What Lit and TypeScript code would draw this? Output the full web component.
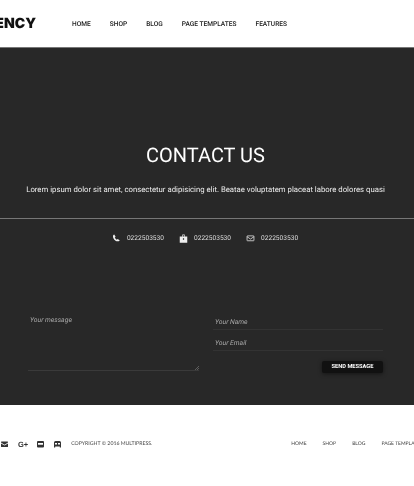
import { LitElement, html, css, svg } from 'lit';
import { customElement } from 'lit/decorators.js';

const icons = {
  phone: svg`<path d="M2.500.8 4.300 3.600 3.200 4.800c.5 1.200 1.500 2.200 2.700 2.800l1.100-1.100 2.700 1.700c-.3 1-1.100 1.600-2.100 1.500C4.300 10.300.6 6.300.8 2.600c.1-.9.700-1.600 1.700-1.800z" fill="currentColor"/>`,
  bag: svg`<path fill-rule="evenodd" d="M.5 3.200h3V1.900C3.500 1 4 .6 4.500.6h2c.6 0 1 .4 1 1.300v1.300h3V11.500H.5zM4.300 3.200h2.400V1.800c0-.2-.1-.3-.3-.3H4.600c-.2 0-.3.1-.3.3zM4.700 5.500v2.200h1.600V5.500z" fill="currentColor"/>`,
  mail: svg`<path d="M1.500 2.500h8a.6.6 0 0 1 .6.6v5.300a.6.6 0 0 1-.6.6h-8a.6.6 0 0 1-.6-.6V3.100a.6.6 0 0 1 .6-.6zM1 3.700l4.500 3 4.500-3" fill="none" stroke="currentColor" stroke-width="1"/>`,
  mailSolid: svg`<path d="M.5 1.500h6a.5.5 0 0 1 .5.500v.6L3.500 4.700 0 2.600V2a.5.5 0 0 1 .5-.5zM0 3.500l3.500 2.100L7 3.500v3a.5.5 0 0 1-.5.500h-6a.5.5 0 0 1-.5-.5z" fill="currentColor"/>`,
  flickr: svg`<path fill-rule="evenodd" d="M1 1h5a1 1 0 0 1 1 1v4.500a1 1 0 0 1-1 1H1a1 1 0 0 1-1-1V2a1 1 0 0 1 1-1zM1 3v1.800h5V3z" fill="currentColor"/>`,
  game: svg`<path fill-rule="evenodd" d="M1.500 1h4A1.500 1.500 0 0 1 7 2.500v5H5.800V6.500H1.200v1H0v-5A1.500 1.500 0 0 1 1.500 1zM1 3v1.500h2V3zm3 0v1.500h2V3z" fill="currentColor"/>`,
};

@customElement('app-root')
export class AppRoot extends LitElement {
  static styles = css`
    :host {
      display: block;
      width: 414px;
      height: 486px;
      overflow: hidden;
      background: #fff;
      font-family: Roboto, "Liberation Sans", sans-serif;
      text-rendering: geometricPrecision;
      filter: blur(0.3px);
    }
    .header {
      display: flex;
      align-items: center;
      height: 48px;
      box-sizing: border-box;
      border-bottom: 1px solid #777;
    }
    .logo {
      flex: none;
      width: 36px;
      display: flex;
      justify-content: flex-end;
      font-family: Inter, "Liberation Sans", sans-serif;
      font-weight: 900;
      font-size: 14px;
      color: #111;
      white-space: nowrap;
    }
    .nav {
      display: flex;
      gap: 19px;
      margin-left: 36px;
      font-size: 6.6px;
      font-weight: 500;
      color: #222;
      white-space: nowrap;
    }
    .dark {
      height: 357px;
      box-sizing: border-box;
      padding-top: 94px;
      background: #282828;
      display: flex;
      flex-direction: column;
    }
    h1 {
      margin: 0;
      padding-right: 3px;
      text-align: center;
      font-weight: 400;
      font-size: 20px;
      line-height: 26px;
      color: #fff;
    }
    .lead {
      margin: 16px 0 0;
      padding-right: 3px;
      text-align: center;
      font-size: 7.75px;
      line-height: 12px;
      color: #eee;
      white-space: nowrap;
    }
    .rule {
      height: 1px;
      margin-top: 22px;
      background: #777;
    }
    .contacts {
      display: flex;
      justify-content: center;
      gap: 15px;
      margin-top: 13px;
      padding-right: 4px;
      font-size: 6.6px;
      line-height: 12px;
      color: #ddd;
    }
    .contact {
      display: flex;
      align-items: center;
      gap: 6px;
    }
    .contact svg {
      width: 9px;
      height: 9px;
      color: #eee;
    }
    .form {
      display: flex;
      gap: 14px;
      margin: 65px 31px 0 28px;
    }
    .message {
      width: 171px;
      height: 62px;
      box-sizing: border-box;
      padding: 5px 2px;
      border-bottom: 1px solid #3a3a3a;
      position: relative;
    }
    .placeholder {
      display: block;
      font-style: italic;
      font-size: 6.8px;
      line-height: 12px;
      color: #aaa;
    }
    .grip {
      position: absolute;
      right: 0;
      bottom: 0;
      width: 4px;
      height: 4px;
      color: #888;
    }
    .fields {
      flex: 1;
      display: flex;
      flex-direction: column;
    }
    .field {
      height: 21px;
      box-sizing: border-box;
      padding: 7px 2px 0;
      border-bottom: 1px solid #333;
    }
    .send {
      align-self: flex-end;
      margin-top: 10px;
      width: 61px;
      height: 12px;
      border-radius: 2px;
      background: #111;
      color: #fff;
      font-size: 5.7px;
      font-weight: 700;
      line-height: 12px;
      text-align: center;
      box-shadow: 0 1px 4px rgba(0, 0, 0, 0.5);
    }
    .footer {
      display: flex;
      align-items: center;
      height: 78px;
      box-sizing: border-box;
      padding-left: 1px;
      white-space: nowrap;
      color: #333;
    }
    .social {
      display: flex;
      align-items: center;
      gap: 9px;
      flex: none;
    }
    .social svg {
      width: 8px;
      height: 8px;
    }
    .gplus {
      font-family: "Liberation Sans", sans-serif;
      font-size: 7.5px;
      font-weight: 700;
      line-height: 8px;
      margin-top: 1px;
    }
    .copy {
      flex: none;
      margin-left: 9px;
      font-family: Lato, sans-serif;
      font-size: 5.2px;
      color: #444;
      width: 220px;
    }
    .foot-nav {
      display: flex;
      flex: none;
      gap: 16px;
      font-family: Lato, sans-serif;
      font-size: 5px;
      color: #444;
    }
  `;

  private contact(icon: unknown) {
    return html`<span class="contact">
      <svg viewBox="0 0 11 12">${icon}</svg><span>0222503530</span>
    </span>`;
  }

  render() {
    return html`
      <header class="header">
        <div class="logo"><span>AGENCY</span></div>
        <nav class="nav">
          <span>HOME</span>
          <span>SHOP</span>
          <span>BLOG</span>
          <span>PAGE TEMPLATES</span>
          <span>FEATURES</span>
        </nav>
      </header>
      <section class="dark">
        <h1>CONTACT US</h1>
        <p class="lead">Lorem ipsum dolor sit amet, consectetur adipisicing elit. Beatae voluptatem placeat labore dolores quasi</p>
        <div class="rule"></div>
        <div class="contacts">
          ${this.contact(icons.phone)} ${this.contact(icons.bag)} ${this.contact(icons.mail)}
        </div>
        <div class="form">
          <div class="message">
            <span class="placeholder">Your message</span>
            <svg class="grip" viewBox="0 0 5 5"><path d="M5 0 0 5M5 2.500 2.500 5" stroke="currentColor" stroke-width=".7"/></svg>
          </div>
          <div class="fields">
            <div class="field placeholder">Your Name</div>
            <div class="field placeholder">Your Email</div>
            <div class="send">SEND MESSAGE</div>
          </div>
        </div>
      </section>
      <footer class="footer">
        <div class="social">
          <svg viewBox="0 0 8 8">${icons.mailSolid}</svg>
          <span class="gplus">G+</span>
          <svg viewBox="0 0 8 8">${icons.flickr}</svg>
          <svg viewBox="0 0 8 8">${icons.game}</svg>
        </div>
        <div class="copy">COPYRIGHT © 2016 MULTIPRESS.</div>
        <nav class="foot-nav">
          <span>HOME</span>
          <span>SHOP</span>
          <span>BLOG</span>
          <span>PAGE TEMPLATES</span>
        </nav>
      </footer>
    `;
  }
}
